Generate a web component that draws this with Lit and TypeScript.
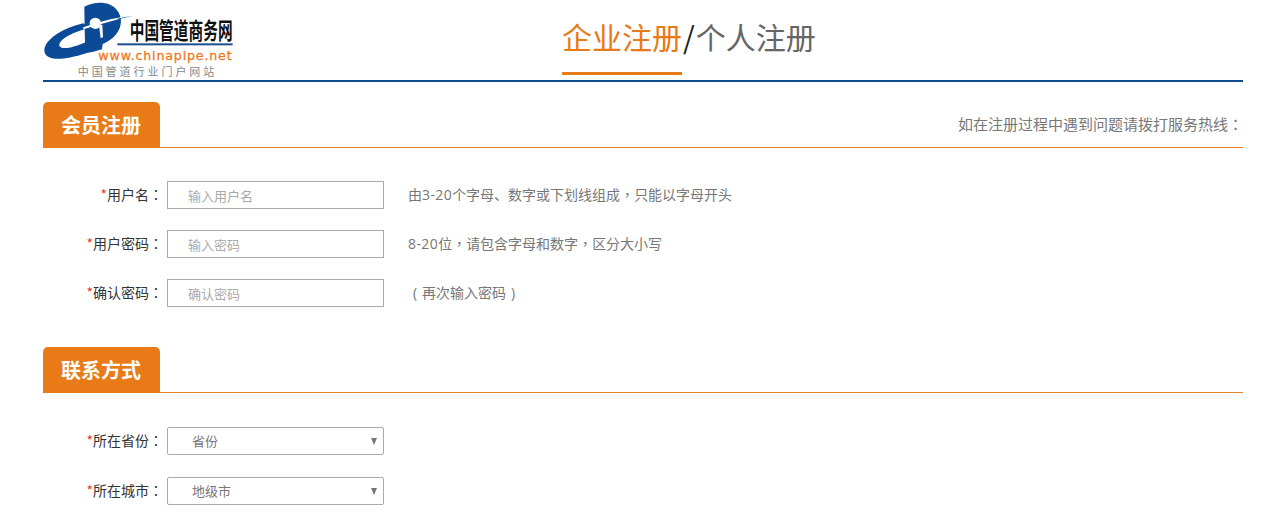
import { LitElement, html, css, svg } from "lit";
import { customElement } from "lit/decorators.js";

const logo = svg`
<svg class="logo" viewBox="39 0 576 234" width="192" height="78" aria-label="logo">
  <path fill="#0a4a96" d="M160 70 C100 83 45 118 43 150 C42 180 88 186 168 160 L172 125 C130 142 94 152 88 137 C86 118 130 95 178 84 Z"/>
  <path fill="#0a4a96" d="M163 20 C195 3 238 3 258 27 C282 52 276 90 248 114 C236 123 226 129 218 132 L216 148 C198 154 182 158 166 160 L164 90 Z"/>
  <circle cx="196" cy="70" r="17" fill="#fff"/>
  <path fill="#fff" d="M207 76 L217 74 L219 112 L212 114 Z"/>
  <path fill="#fff" d="M316 44 C270 50 215 62 160 82 L160 88 C215 70 268 57 316 44 Z"/>
  <path fill="#0a4a96" d="M310 47 C290 50 275 53 262 56 L262 59 C280 54 296 50 310 47 Z"/>
  <text transform="translate(299 116) scale(1 1.55)" class="lt" textLength="309">中国管道商务网</text>
  <rect x="262" y="130" width="346" height="6" fill="#1d4f8f"/>
  <text x="205" y="179" class="lu" textLength="400">www.chinapipe.net</text>
  <text x="143" y="228" class="lg" textLength="410">中国管道行业门户网站</text>
</svg>`;

@customElement("app-root")
export class AppRoot extends LitElement {
  static styles = css`
    :host {
      display: block;
      width: 1282px;
      height: 515px;
      overflow: hidden;
      background: #fff;
      font-family: "Noto Sans CJK SC", "Liberation Sans", sans-serif;
      font-size: 14px;
      color: #333;
    }
    .page { width: 1200px; margin-left: 43px; }
    header {
      height: 80px;
      border-bottom: 2px solid #0f4a8a;
      display: flex;
    }
    .logo { display: block; flex: none; }
    .lt { font: 700 44px "Noto Sans CJK SC", sans-serif; fill: #111; }
    .lu { font: 400 38px "DejaVu Sans", sans-serif; fill: #f0761a; stroke: #f0761a; stroke-width: 0.8px; }
    .lg { font: 400 33px "Noto Sans CJK SC", sans-serif; fill: #888; }
    .tabs {
      margin-left: 327px;
      font-size: 30px;
      line-height: 72px;
      height: 75px;
      color: #666;
      display: flex;
      white-space: nowrap;
    }
    .tabs .on {
      color: #e87a17;
      height: 72px;
      border-bottom: 3px solid #e87a17;
    }
    .tabs .sl { color: #222; padding: 0 1px; }
    .sec {
      margin-top: 20px;
      height: 46px;
      border-bottom: 1px solid #e0822a;
      display: flex;
      justify-content: space-between;
      box-sizing: border-box;
    }
    .sec + .rows { padding-top: 33px; }
    .sec h2 {
      margin: 0;
      width: 117px;
      height: 46px;
      box-sizing: border-box;
      padding-left: 18px;
      background: #e87a17;
      color: #fff;
      font-size: 20px;
      font-weight: 700;
      line-height: 46px;
      border-radius: 5px 5px 0 0;
    }
    .sec .tip { font-size: 15px; line-height: 43px; color: #777; }
    .rows { display: flex; flex-direction: column; gap: 21px; }
    .rows.two { gap: 22px; padding-top: 34px !important; }
    .second { margin-top: 40px; }
    .row { display: flex; align-items: center; height: 28px; }
    label {
      width: 120px;
      flex: none;
      text-align: right;
      white-space: nowrap;
      color: #333;
      padding-bottom: 2px;
    }
    label i { font-style: normal; color: #e8391d; }
    .p { font-family: "Noto Sans CJK TC", sans-serif; }
    .n { font-family: "Open Sans", sans-serif; letter-spacing: 0.4px; }
    .pr { display: inline-block; width: 14px; text-align: center; font-family: "Open Sans", sans-serif; }
    input {
      margin-left: 4px;
      width: 217px;
      height: 28px;
      box-sizing: border-box;
      border: 1px solid #aaa;
      padding: 0 0 0 20px;
      font: inherit;
      font-size: 13px;
      outline: none;
      background: #fff;
    }
    input::placeholder { color: #aaa; opacity: 1; }
    .hint { margin-left: 24px; color: #777; white-space: nowrap; padding-bottom: 2px; }
    .sel { margin-left: 4px; width: 217px; height: 28px; position: relative; }
    select {
      appearance: none;
      width: 100%;
      height: 100%;
      box-sizing: border-box;
      border: 1px solid #aaa;
      border-radius: 2px;
      padding: 0 0 2px 24px;
      background: #fff;
      color: #777;
      font: inherit;
      font-size: 13px;
    }
    .sel::after {
      content: "";
      position: absolute;
      right: 7px;
      top: 11px;
      border-left: 3px solid transparent;
      border-right: 3px solid transparent;
      border-top: 7px solid #777;
    }
  `;

  private field(name: string, ph: string, hint: unknown) {
    return html`<div class="row">
      <label><i>*</i>${name}<span class="p">：</span></label>
      <input type="text" placeholder=${ph} />
      <span class="hint">${hint}</span>
    </div>`;
  }

  private sel(name: string, val: string) {
    return html`<div class="row">
      <label><i>*</i>${name}<span class="p">：</span></label>
      <div class="sel"><select><option>${val}</option></select></div>
    </div>`;
  }

  render() {
    return html`<div class="page">
      <header>
        ${logo}
        <div class="tabs"><span class="on">企业注册</span><span class="sl">/</span><span>个人注册</span></div>
      </header>
      <div class="sec"><h2>会员注册</h2><span class="tip">如在注册过程中遇到问题请拨打服务热线<span class="p">：</span></span></div>
      <div class="rows">
        ${this.field("用户名", "输入用户名", html`由<span class="n">3-20</span>个字母、数字或下划线组成<span class="p">，</span>只能以字母开头`)}
        ${this.field("用户密码", "输入密码", html`<span class="n">8-20</span>位<span class="p">，</span>请包含字母和数字<span class="p">，</span>区分大小写`)}
        ${this.field("确认密码", "确认密码", html`<span class="pr">(</span>再次输入密码<span class="pr">)</span>`)}
      </div>
      <div class="sec second"><h2>联系方式</h2></div>
      <div class="rows two">
        ${this.sel("所在省份", "省份")}
        ${this.sel("所在城市", "地级市")}
      </div>
    </div>`;
  }
}
